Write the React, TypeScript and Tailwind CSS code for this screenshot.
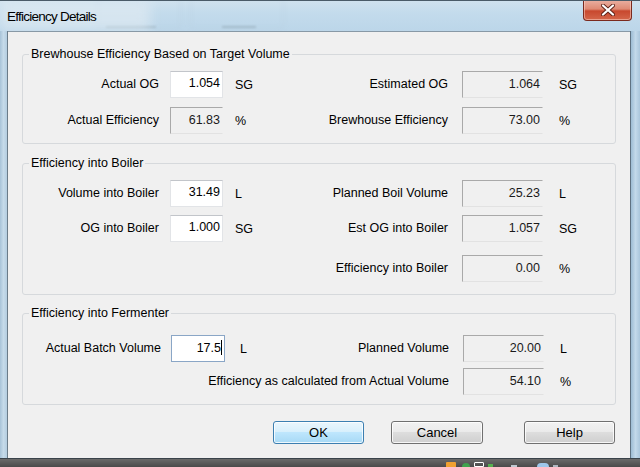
import React from "react";

type Cell = { label: string; value: string; unit: string; editable?: boolean; focused?: boolean };

const A = {
  label: "w-[136px]",
  inMl: "ml-[11px]",
  inW: "w-[53px]",
  unitMl: "ml-[12px]",
  unitW: "w-[40px]",
  rLabel: "w-[173px]",
  boxMl: "ml-[14px]",
  boxW: "w-[81px]",
  rUnitMl: "ml-[16px]",
};
const B = {
  label: "w-[138px]",
  inMl: "ml-[10px]",
  inW: "w-[54px]",
  unitMl: "ml-[15px]",
  unitW: "w-[35px]",
  rLabel: "w-[174px]",
  boxMl: "ml-[14px]",
  boxW: "w-[81px]",
  rUnitMl: "ml-[16px]",
};

function EditBox({ value, focused, w }: { value: string; focused?: boolean; w: string }) {
  return (
    <div
      className={`${w} h-[27px] bg-white border flex justify-end items-start pr-[2px] leading-[16px] text-black ${
        focused ? "border-[#8aa6c6] pt-[4px]" : "border-[#e2e4e7] border-t-[#c2c5ca] pt-[3px]"
      }`}
    >
      <span>{value}</span>
      {focused && <span className="inline-block w-[1px] h-[15px] bg-black mt-[0px]" />}
    </div>
  );
}

function ReadBox({ value, w }: { value: string; w: string }) {
  return (
    <div
      className={`${w} h-[27px] bg-[#f0f0f0] border border-t-[#a9a9a9] border-l-[#a9a9a9] border-r-[#f0f0f0] border-b-[#e2e2e2] flex justify-end items-center pr-[2px] pb-[2px] leading-[16px] text-[#1a1a1a]`}
    >
      {value}
    </div>
  );
}

function Row({ left, right, v, mt }: { left?: Cell; right?: Cell; v: typeof A; mt: string }) {
  return (
    <div className={`flex items-center h-[27px] ${mt}`}>
      <div className={`${v.label} flex justify-end whitespace-nowrap shrink-0`}>{left ? left.label : ""}</div>
      <div className={`${v.inMl} shrink-0`}>
        {left ? (
          left.editable ? (
            <EditBox value={left.value} focused={left.focused} w={v.inW} />
          ) : (
            <ReadBox value={left.value} w={v.inW} />
          )
        ) : (
          <div className={v.inW} />
        )}
      </div>
      <div className={`${v.unitMl} ${v.unitW} shrink-0 pt-[1px]`}>{left ? left.unit : ""}</div>
      {right && (
        <>
          <div className={`${v.rLabel} flex justify-end whitespace-nowrap shrink-0`}>
            <span className="shrink-0">{right.label}</span>
          </div>
          <div className={`${v.boxMl} shrink-0`}>
            <ReadBox value={right.value} w={v.boxW} />
          </div>
          <div className={`${v.rUnitMl} shrink-0 pt-[1px]`}>{right.unit}</div>
        </>
      )}
    </div>
  );
}

function Group({
  title,
  children,
  className,
}: {
  title: string;
  children: React.ReactNode;
  className: string;
}) {
  return (
    <fieldset className={`mx-[14px] border border-[#d6d9dc] rounded-[3px] ${className}`}>
      <legend className="ml-[6px] px-[2px] leading-[16px] text-black">{title}</legend>
      {children}
    </fieldset>
  );
}

function Button({ label, def, className }: { label: string; def?: boolean; className: string }) {
  return (
    <div
      className={`h-[23px] rounded-[3px] border flex items-center justify-center text-black shadow-[inset_0_0_0_1px_rgba(255,255,255,0.8)] ${
        def
          ? "border-[#3c7fb1] bg-[linear-gradient(to_bottom,#eaf6fd_0%,#d9f0fc_45%,#bee6fd_50%,#a7d9f5_100%)]"
          : "border-[#707070] bg-[linear-gradient(to_bottom,#f2f2f2_0%,#ebebeb_45%,#dddddd_50%,#cfcfcf_100%)]"
      } ${className}`}
    >
      {label}
    </div>
  );
}

export default function App() {
  return (
    <div className="w-[640px] h-[467px] overflow-hidden flex flex-col bg-[#b9d2e5] font-['Liberation_Sans',Arial,sans-serif] text-[12.5px] text-black">
      {/* Title bar */}
      <div className="relative h-[31px] shrink-0 flex items-start border-t border-t-[#4a5b68] bg-[linear-gradient(to_bottom,#cfe1ee_0%,#c3dbec_40%,#bcd6e9_100%)] overflow-hidden">
        <div className="absolute left-[97px] top-[-4px] w-[84px] h-[32px] rounded-[4px] border border-[#b0c6d6] opacity-50 blur-[2px]" />
        <div className="absolute left-[190px] top-[-4px] w-[94px] h-[32px] rounded-[4px] border border-[#b0c6d6] opacity-50 blur-[2px]" />
        <div className="absolute left-[106px] top-[25px] w-[50px] h-[2px] bg-[#6a7a86] opacity-30 blur-[1px]" />
        <div className="absolute left-[222px] top-[25px] w-[34px] h-[2px] bg-[#6a7a86] opacity-30 blur-[1px]" />
        <div className="absolute left-[0px] top-[0px] w-[150px] h-[30px] bg-[#e4edf3] opacity-60 blur-[6px]" />
        <div className="relative pl-[7px] pt-[7px] text-[13.5px] leading-[18px] tracking-[-0.75px] text-black">
          Efficiency Details
        </div>
        <div className="flex-1" />
        <div className="relative mr-[8px] mt-[-1px] w-[49px] h-[21px] rounded-b-[4px] border border-[#7a2a1e] border-t-0 bg-[linear-gradient(to_bottom,#eab0a2_0%,#df8a74_45%,#c8482e_55%,#d4664a_100%)] flex items-center justify-center shadow-[inset_0_0_0_1px_rgba(255,220,210,0.5)]">
          <svg width="14" height="12" viewBox="0 0 14 12">
            <path d="M2 1.5 L12 10.5 M12 1.5 L2 10.5" stroke="#5a1e14" strokeWidth="4" strokeLinecap="round" />
            <path d="M2 1.5 L12 10.5 M12 1.5 L2 10.5" stroke="#ffffff" strokeWidth="2.3" strokeLinecap="round" />
          </svg>
        </div>
      </div>

      {/* Middle */}
      <div className="flex h-[427px] shrink-0">
        <div className="w-[7px] bg-[linear-gradient(to_right,#a8c3d8,#c6dbea,#b4cde0)]" />
        <div className="w-[1px] bg-[#6b7c89]" />
        <div className="w-[622px] bg-[#f0f0f0] border-t border-t-[#8899a6] flex flex-col">
          <Group title="Brewhouse Efficiency Based on Target Volume" className="mt-[14px] pt-[9px] pb-[9px]">
            <Row
              v={A}
              mt=""
              left={{ label: "Actual OG", value: "1.054", unit: "SG", editable: true }}
              right={{ label: "Estimated OG", value: "1.064", unit: "SG" }}
            />
            <Row
              v={A}
              mt="mt-[9px]"
              left={{ label: "Actual Efficiency", value: "61.83", unit: "%" }}
              right={{ label: "Brewhouse Efficiency", value: "73.00", unit: "%" }}
            />
          </Group>

          <Group title="Efficiency into Boiler" className="mt-[11px] pt-[9px] pb-[12px]">
            <Row
              v={A}
              mt=""
              left={{ label: "Volume into Boiler", value: "31.49", unit: "L", editable: true }}
              right={{ label: "Planned Boil Volume", value: "25.23", unit: "L" }}
            />
            <Row
              v={A}
              mt="mt-[8px]"
              left={{ label: "OG into Boiler", value: "1.000", unit: "SG", editable: true }}
              right={{ label: "Est OG into Boiler", value: "1.057", unit: "SG" }}
            />
            <Row
              v={A}
              mt="mt-[13px]"
              right={{ label: "Efficiency into Boiler", value: "0.00", unit: "%" }}
            />
          </Group>

          <Group title="Efficiency into Fermenter" className="mt-[10px] pt-[14px] pb-[9px]">
            <Row
              v={B}
              mt=""
              left={{ label: "Actual Batch Volume", value: "17.5", unit: "L", editable: true, focused: true }}
              right={{ label: "Planned Volume", value: "20.00", unit: "L" }}
            />
            <Row
              v={B}
              mt="mt-[6px]"
              right={{ label: "Efficiency as calculated from Actual Volume", value: "54.10", unit: "%" }}
            />
          </Group>

          <div className="flex mt-[16px] pl-[265px] text-[13px]">
            <Button label="OK" def className="w-[91px]" />
            <Button label="Cancel" className="w-[92px] ml-[27px]" />
            <Button label="Help" className="w-[91px] ml-[41px]" />
          </div>
        </div>
        <div className="w-[1px] bg-[#5f7282]" />
        <div className="w-[9px] bg-[linear-gradient(to_right,#9dbcd4,#c3d9ea,#aac6dc)]" />
      </div>

      {/* Bottom frame + taskbar */}
      <div className="h-[1px] shrink-0 bg-[#3a434a]" />
      <div className="h-[8px] shrink-0 flex items-end bg-[linear-gradient(to_bottom,#6a6a6a,#4a4a4a)]">
        <div className="ml-[446px] w-[10px] h-[5px] bg-[#f0a030] rounded-t-[1px]" />
        <div className="ml-[6px] w-[8px] h-[4px] bg-[#3fa34d] rounded-t-full" />
        <div className="ml-[4px] w-[10px] h-[5px] border border-white rounded-t-[1px]" />
        <div className="ml-[4px] w-[5px] h-[3px] bg-[#56b04f]" />
        <div className="ml-[18px] w-[6px] h-[2px] bg-[#bfc9d2]" />
        <div className="ml-[20px] w-[12px] h-[4px] bg-[#9ec7ea] rounded-t-full" />
        <div className="ml-[4px] w-[5px] h-[2px] bg-[#aeb7c0]" />
      </div>
    </div>
  );
}
